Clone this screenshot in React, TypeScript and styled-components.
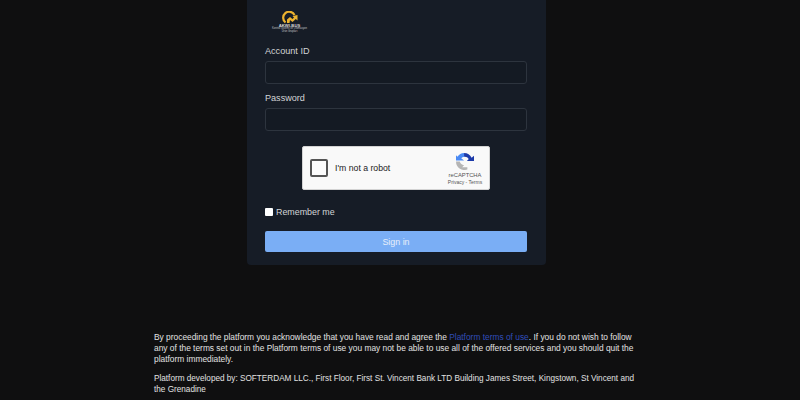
import React from 'react'
import styled, { createGlobalStyle } from 'styled-components'

const GlobalStyle = createGlobalStyle`
    html, body {
        margin : 0;
        padding : 0;
        height : 400px;
        overflow : hidden;
        background : #0f0f10;
        font-family : "Liberation Sans", Arial, sans-serif;
    }
`

const Page = styled.div`
    width : 793px;
    height : 400px;
    overflow : hidden;
    display : flex;
    flex-direction : column;
    align-items : center;
`

const Card = styled.div`
    width : 299px;
    height : 265px;
    box-sizing : border-box;
    padding : 11px 19px 0 18px;
    background : #161c26;
    border-radius : 0 0 4px 4px;
    flex-shrink : 0;
`

const Logo = styled.div`
    width : 33px;
    margin-left : 8px;
    height : 24px;
    display : flex;
    flex-direction : column;
    align-items : center;
`

const LogoName = styled.div`
    font-size : 4.2px;
    line-height : 4px;
    font-weight : bold;
    color : #d6d6d6;
    white-space : nowrap;
`

const LogoTag = styled.div`
    font-size : 2.6px;
    line-height : 2.8px;
    color : #c4c6ca;
    white-space : nowrap;
    text-align : center;
`

const Label = styled.label<{ $top: number }>`
    display : block;
    font-size : 9.1px;
    line-height : 12px;
    color : #d3d4d6;
    margin-top : ${(props) => props.$top}px;
`

const Input = styled.div`
    box-sizing : border-box;
    width : 262px;
    height : 23px;
    margin-top : 4px;
    border : 1px solid #2d343e;
    border-radius : 3px;
    background : #141a23;
`

const Captcha = styled.div`
    box-sizing : border-box;
    width : 188px;
    height : 44px;
    margin : 15px 0 0 37px;
    background : #f9f9f9;
    border : 1px solid #d3d3d3;
    border-radius : 2px;
    display : flex;
    align-items : center;
    padding : 0 5px 0 7px;
`

const CaptchaBox = styled.div`
    box-sizing : border-box;
    width : 18px;
    height : 18px;
    background : #fcfcfc;
    border : 2px solid #555;
    border-radius : 2px;
    flex-shrink : 0;
`

const CaptchaText = styled.span`
    margin-left : 7px;
    font-size : 8.7px;
    color : #222;
    flex-grow : 1;
`

const CaptchaBrand = styled.div`
    width : 38px;
    display : flex;
    flex-direction : column;
    align-items : center;
    padding-top : 1px;
`

const BrandName = styled.div`
    font-size : 5.8px;
    line-height : 7px;
    margin-top : 2px;
    color : #555;
`

const BrandLinks = styled.div`
    font-size : 5px;
    line-height : 6px;
    color : #555;
    white-space : nowrap;
`

const RememberRow = styled.div`
    display : flex;
    align-items : center;
    margin-top : 16px;
    height : 12px;
`

const RememberBox = styled.div`
    box-sizing : border-box;
    width : 8px;
    height : 8px;
    background : #fff;
    border-radius : 1px;
    margin-top : -1px;
`

const RememberText = styled.span`
    margin-left : 3px;
    font-size : 8.9px;
    color : #d3d4d6;
`

const SignIn = styled.div`
    width : 262px;
    height : 21px;
    margin-top : 13px;
    background : #7aaef5;
    border-radius : 2px;
    display : flex;
    align-items : center;
    justify-content : center;
    font-size : 8.9px;
    color : #e8effa;
`

const Footer = styled.div`
    width : 485px;
    margin-top : 67px;
    flex-shrink : 0;
`

const Paragraph = styled.p<{ $size: number }>`
    margin : 0 0 8px;
    font-size : ${(props) => props.$size}px;
    line-height : 11px;
    color : #e2e2e2;
`

const TermsLink = styled.a`
    color : #2f4db8;
`

const App = () => {
    return (
        <Page>
            <GlobalStyle />
            <Card>
                <Logo>
                    <svg width="16" height="13" viewBox="0 0 16 13">
                        <path
                            d="M3.5 11.5 A6 6 0 1 1 12.5 4"
                            fill="none"
                            stroke="#edb32f"
                            strokeWidth="2.2"
                        />
                        <path d="M5 12 L5 8.5 L8 6 L10.5 8 L12 6.5 L10.5 5 L15.5 4 L15.5 9.5 L13.8 8 L10.5 11 L8 9 L7.5 12 Z" fill="#edb32f" />
                    </svg>
                    <LogoName>AKWI-BUS</LogoName>
                    <LogoTag>Kontrol Sistemi ve Otomasyon<br />Ürün Grupları</LogoTag>
                </Logo>
                <Label $top={10}>Account ID</Label>
                <Input />
                <Label $top={8}>Password</Label>
                <Input />
                <Captcha>
                    <CaptchaBox />
                    <CaptchaText>I'm not a robot</CaptchaText>
                    <CaptchaBrand>
                        <svg width="20" height="18" viewBox="0 0 20 19">
                            <path d="M9 1 A9 9 0 0 0 2 5 L0.5 3.5 L0.5 9 L9 9 L6 6.5 A4.5 4.5 0 0 1 9 5 Z" fill="#4a8af4" />
                            <path d="M9 1 A9 9 0 0 1 17 6 L19.5 4 L19.5 9.5 L12 9.5 L14 7.5 A5 5 0 0 0 9 5 Z" fill="#1c3aa9" />
                            <path d="M0.5 10 L4.5 10 A5.5 5.5 0 0 0 9 14 L7 16 L12.5 16 L12.5 18.5 A9 9 0 0 1 0.5 10 Z" fill="#b5b5b5" />
                        </svg>
                        <BrandName>reCAPTCHA</BrandName>
                        <BrandLinks>Privacy - Terms</BrandLinks>
                    </CaptchaBrand>
                </Captcha>
                <RememberRow>
                    <RememberBox />
                    <RememberText>Remember me</RememberText>
                </RememberRow>
                <SignIn>Sign in</SignIn>
            </Card>
            <Footer>
                <Paragraph $size={8.4}>
                    By proceeding the platform you acknowledge that you have read and agree the{' '}
                    <TermsLink>Platform terms of use</TermsLink>. If you do not wish to follow any of the terms set out in the Platform terms of use you may not be able to use all of the offered services and you should quit the platform immediately.
                </Paragraph>
                <Paragraph $size={8.2}>
                    Platform developed by: SOFTERDAM LLC., First Floor, First St. Vincent Bank LTD Building James Street, Kingstown, St Vincent and the Grenadine
                </Paragraph>
            </Footer>
        </Page>
    )
}

export default App
